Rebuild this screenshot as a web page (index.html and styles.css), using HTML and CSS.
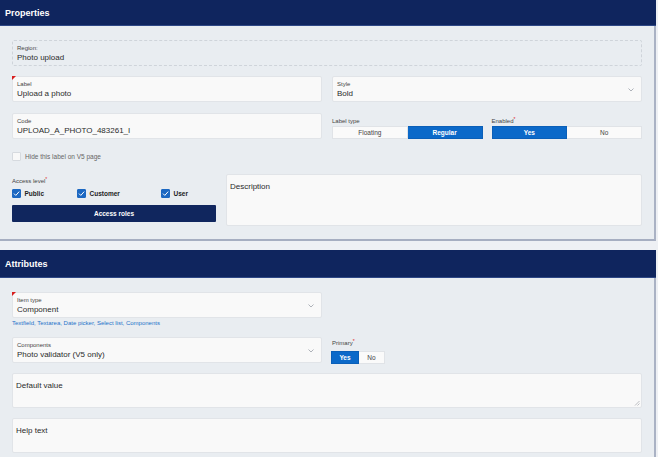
FILE: index.html
```html
<!DOCTYPE html>
<html>
<head>
<meta charset="utf-8">
<link rel="stylesheet" href="styles.css">
</head>
<body>
<div class="page">
  <section class="panel panel-props">
    <div class="panel-head">Properties</div>
    <div class="panel-body">
      <div class="field field-static">
        <div class="f-label">Region:</div>
        <div class="f-value">Photo upload</div>
      </div>
      <div class="row row-gap">
        <div class="field req">
          <div class="f-label">Label</div>
          <div class="f-value">Upload a photo</div>
        </div>
        <div class="field field-select">
          <div class="f-text">
            <div class="f-label">Style</div>
            <div class="f-value">Bold</div>
          </div>
          <svg class="chev" width="6" height="4" viewBox="0 0 6 4"><path d="M0.5 0.5 L3 3 L5.5 0.5" fill="none" stroke="#9aa0a8" stroke-width="0.8"/></svg>
        </div>
      </div>
      <div class="row row-code">
        <div class="field">
          <div class="f-label">Code</div>
          <div class="f-value">UPLOAD_A_PHOTO_483261_I</div>
        </div>
        <div class="toggles">
          <div class="tgroup">
            <div class="g-label">Label type</div>
            <div class="seg"><span>Floating</span><span class="on">Regular</span></div>
          </div>
          <div class="tgroup">
            <div class="g-label">Enabled<span class="star">*</span></div>
            <div class="seg"><span class="on">Yes</span><span>No</span></div>
          </div>
        </div>
      </div>
      <div class="check-line"><span class="cb"></span><span>Hide this label on V5 page</span></div>
      <div class="row row-access">
        <div class="access">
          <div class="g-label">Access level<span class="star">*</span></div>
          <div class="checks">
            <div class="chk chk-public"><span class="cb on"><svg width="9" height="9" viewBox="0 0 9 9"><path d="M2 4.6 L3.8 6.4 L7.2 2.6" fill="none" stroke="#fff" stroke-width="1"/></svg></span>Public</div>
            <div class="chk chk-customer"><span class="cb on"><svg width="9" height="9" viewBox="0 0 9 9"><path d="M2 4.6 L3.8 6.4 L7.2 2.6" fill="none" stroke="#fff" stroke-width="1"/></svg></span>Customer</div>
            <div class="chk"><span class="cb on"><svg width="9" height="9" viewBox="0 0 9 9"><path d="M2 4.6 L3.8 6.4 L7.2 2.6" fill="none" stroke="#fff" stroke-width="1"/></svg></span>User</div>
          </div>
          <div class="btn-roles">Access roles</div>
        </div>
        <div class="desc">Description</div>
      </div>
    </div>
  </section>

  <section class="panel panel-attr">
    <div class="panel-head">Attributes</div>
    <div class="panel-body">
      <div class="half">
        <div class="field field-select req">
          <div class="f-text">
            <div class="f-label">Item type</div>
            <div class="f-value">Component</div>
          </div>
          <svg class="chev" width="6" height="4" viewBox="0 0 6 4"><path d="M0.5 0.5 L3 3 L5.5 0.5" fill="none" stroke="#9aa0a8" stroke-width="0.8"/></svg>
        </div>
        <div class="link">Textfield, Textarea, Date picker, Select list, Components</div>
      </div>
      <div class="row row-comp">
        <div class="field field-select">
          <div class="f-text">
            <div class="f-label">Components</div>
            <div class="f-value">Photo validator (V5 only)</div>
          </div>
          <svg class="chev" width="6" height="4" viewBox="0 0 6 4"><path d="M0.5 0.5 L3 3 L5.5 0.5" fill="none" stroke="#9aa0a8" stroke-width="0.8"/></svg>
        </div>
        <div class="primary">
          <div class="g-label">Primary<span class="star">*</span></div>
          <div class="seg seg-small"><span class="on">Yes</span><span>No</span></div>
        </div>
      </div>
      <div class="area area-default">Default value
        <svg class="grip" width="6" height="6" viewBox="0 0 6 6"><path d="M5.5 1 L1 5.5 M5.5 3.5 L3.5 5.5" stroke="#a0a4aa" stroke-width="0.7"/></svg>
      </div>
      <div class="area area-help">Help text</div>
    </div>
  </section>
</div>
</body>
</html>
```
FILE: styles.css
```css
html, body {
  margin: 0;
  padding: 0;
}
body {
  background: #eef0f4;
  font-family: "Liberation Sans", Arial, sans-serif;
  color: #333;
}
.page {
  width: 658px;
  height: 457px;
  overflow: hidden;
}
.panel {
  width: 656px;
  background: #e9edf1;
}
.panel-head {
  box-sizing: border-box;
  height: 26px;
  background: #0f255e;
  border-bottom: 1px solid #2e4886;
  color: #fff;
  font-weight: bold;
  font-size: 9px;
  padding-left: 5px;
  display: flex;
  align-items: center;
}
.panel-attr {
  margin-top: 9px;
}
.panel-attr .panel-head {
  height: 28px;
}
.panel-body {
  border-right: 2px solid #aab2c4;
  padding: 14px 12px 13px 12px;
}
.panel-props .panel-body {
  border-bottom: 2px solid #a6aec1;
}
.panel-attr .panel-body {
  padding-bottom: 20px;
}

/* fields */
.field {
  position: relative;
  box-sizing: border-box;
  height: 26px;
  background: #f9f9f9;
  border: 1px solid #e1e4e8;
  border-radius: 2px;
  padding: 4px 4px 0 4px;
}
.field-static {
  background: transparent;
  border: 1px dashed #cfd4da;
}
.f-label {
  font-size: 6px;
  line-height: 7px;
  color: #444;
}
.f-value {
  font-size: 8px;
  line-height: 11px;
  color: #2b2b2b;
}
.req::before {
  content: "";
  position: absolute;
  left: -1px;
  top: -1px;
  border-top: 4px solid #d81e1e;
  border-right: 4px solid transparent;
}
.field-select {
  display: flex;
  align-items: center;
  padding-top: 0;
  padding-right: 7px;
}
.field-select .f-text {
  flex: 1;
  padding-top: 1px;
}
.chev {
  display: block;
  margin-top: 1px;
}

.row {
  display: flex;
  gap: 10px;
}
.row > .field {
  flex: 0 0 310px;
}
.row-gap {
  margin-top: 10px;
}
.row-code {
  margin-top: 11px;
}
.toggles {
  flex: 1;
  display: flex;
  gap: 9px;
  align-items: flex-end;
}
.tgroup {
  flex: 1;
  display: flex;
  flex-direction: column;
}
.g-label {
  font-size: 6px;
  line-height: 8px;
  color: #444;
  margin-bottom: 1px;
}
.star {
  color: #e02424;
  font-size: 5px;
  vertical-align: top;
  line-height: 5px;
}
.seg {
  display: flex;
  height: 13px;
}
.seg span {
  flex: 1;
  box-sizing: border-box;
  display: flex;
  align-items: center;
  justify-content: center;
  font-size: 6.5px;
  color: #444;
  background: #fafafa;
  border: 1px solid #e0e3e7;
}
.seg span + span {
  border-left: none;
}
.seg span.on {
  background: #0b69c9;
  border-color: #0a5fb8;
  color: #fff;
  font-weight: bold;
}

/* checkbox */
.check-line {
  margin-top: 13px;
  display: flex;
  align-items: center;
  gap: 4px;
  font-size: 6.5px;
  line-height: 9px;
  color: #666;
}
.cb {
  box-sizing: border-box;
  width: 9px;
  height: 9px;
  flex: 0 0 9px;
  border: 1px solid #d6dadf;
  background: #f8f8f8;
  border-radius: 1px;
  position: relative;
}
.cb.on {
  background: #1c68c2;
  border-color: #1c68c2;
}
.cb.on svg {
  position: absolute;
  left: -1px;
  top: -1px;
}

.row-access {
  margin-top: 13px;
  align-items: flex-start;
}
.access {
  flex: 0 0 204px;
  padding-top: 3px;
}
.access .g-label {
  margin-bottom: 4px;
}
.checks {
  display: flex;
  height: 9px;
}
.chk {
  display: flex;
  align-items: center;
  gap: 3.5px;
  font-size: 6.5px;
  font-weight: bold;
  color: #222;
}
.chk-public {
  width: 65px;
}
.chk-customer {
  width: 84px;
}
.btn-roles {
  margin-top: 7px;
  height: 17px;
  background: #10265e;
  border-radius: 1px;
  color: #fff;
  font-weight: bold;
  font-size: 6.5px;
  display: flex;
  align-items: center;
  justify-content: center;
}
.desc {
  flex: 1;
  box-sizing: border-box;
  height: 52px;
  background: #f9f9f9;
  border: 1px solid #e1e4e8;
  border-radius: 2px;
  padding: 6px 3px;
  font-size: 8px;
  line-height: 11px;
  color: #2b2b2b;
}

/* attributes */
.half {
  width: 310px;
}
.link {
  margin-top: 1px;
  font-size: 6px;
  line-height: 8px;
  color: #1f72c9;
}
.row-comp {
  margin-top: 10px;
}
.primary {
  padding-top: 2px;
}
.primary .g-label {
  margin-bottom: 4px;
}
.seg-small {
  width: 54px;
  margin-left: -1px;
}
.seg-small span:first-child {
  flex: 0 0 28px;
}
.area {
  position: relative;
  box-sizing: border-box;
  height: 35px;
  background: #f9f9f9;
  border: 1px solid #e1e4e8;
  border-radius: 2px;
  padding: 6px 3px;
  font-size: 8px;
  line-height: 11px;
  color: #2b2b2b;
}
.area-default {
  margin-top: 9px;
}
.area-help {
  margin-top: 10px;
}
.grip {
  position: absolute;
  right: 1px;
  bottom: 1px;
}
```
